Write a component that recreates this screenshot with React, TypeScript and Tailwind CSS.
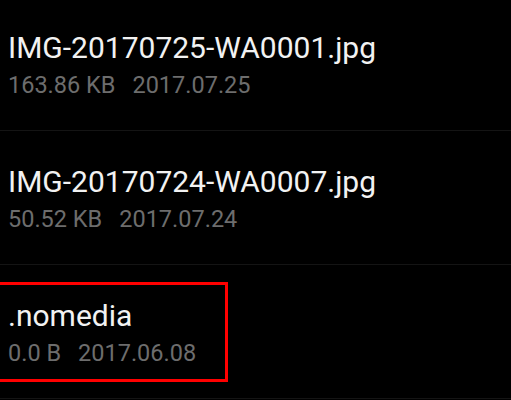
const files = [
  { name: 'IMG-20170725-WA0001.jpg', size: '163.86 KB', date: '2017.07.25' },
  { name: 'IMG-20170724-WA0007.jpg', size: '50.52 KB', date: '2017.07.24' },
  { name: '.nomedia', size: '0.0 B', date: '2017.06.08', marked: true },
];

export default function App() {
  return (
    <div className="w-[511px] h-[400px] overflow-hidden bg-black font-['Roboto',sans-serif]">
      <div className="-mt-[3px] flex flex-col">
        {files.map((f) => (
          <div key={f.name} className="relative h-[134px] border-b border-[#141414] pl-[8px] pt-[33px]">
            <div className="text-[30px] leading-[36px] text-[#f2f2f2]">{f.name}</div>
            <div className="mt-[5px] flex gap-[17px] text-[23.5px] leading-[28px] text-[#6d6d6d]">
              <span>{f.size}</span>
              <span>{f.date}</span>
            </div>
            {f.marked && (
              <div className="absolute left-[-3px] top-[17px] h-[100px] w-[231px] border-[3px] border-[#ff0000]" />
            )}
          </div>
        ))}
      </div>
    </div>
  );
}
